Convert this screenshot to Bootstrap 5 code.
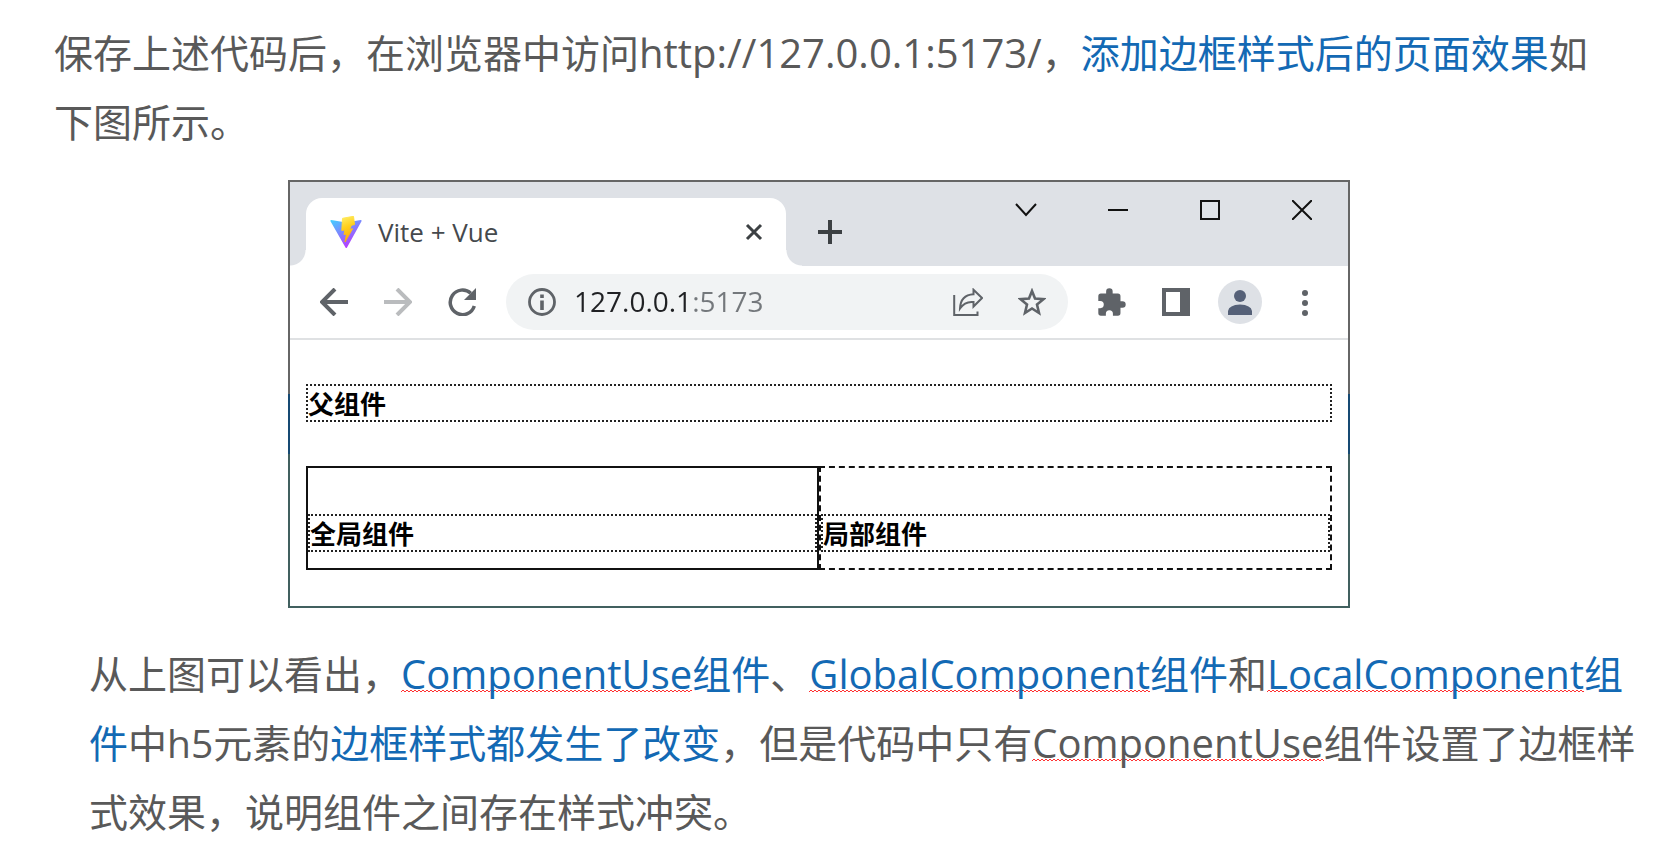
<!DOCTYPE html>
<html lang="zh-CN">
<head>
<meta charset="utf-8">
<meta name="viewport" content="width=device-width, initial-scale=1">
<title>添加边框样式后的页面效果</title>
<link href="https://cdn.jsdelivr.net/npm/bootstrap@5.3.0/dist/css/bootstrap.min.css" rel="stylesheet">
<style>
  body { font-family: "Open Sans", "Noto Sans CJK SC", sans-serif; color: #595959; background: #fff; }
  .lesson { padding: 18px 54px 0; }
  .prose { font-size: 39px; line-height: 69px; margin: 0; }
  .prose-intro { padding-right: 16px; }
  .prose-note { margin-left: 35px; margin-right: -28px; }
  .key { color: #1369b4; }
  .latin, .spell { font-size: 40px; line-height: 1; }
  .spell {
    background: url("data:image/svg+xml,%3Csvg xmlns='http://www.w3.org/2000/svg' width='4' height='4'%3E%3Cpath d='M0 3L2 1L4 3' fill='none' stroke='%23f33' stroke-width='1'/%3E%3C/svg%3E") repeat-x left bottom 8px;
  }
  .shot { padding-right: 34px; margin: 24px 0 31px; }
  .browser {
    width: 100%; max-width: 1062px; border: 2px solid;
    border-image: linear-gradient(#666 50%, #164a73 50%, #164a73 64%, #41605f 64%) 2;
  }
  .strip { background: #dee1e6; height: 84px; padding-left: 16px; }
  .tab { position: relative; width: 480px; height: 68px; background: #fff; border-radius: 16px 16px 0 0; padding: 0 8px 0 24px; color: #45494d; font-size: 26px; }
  .tab::before, .tab::after { content: ""; position: absolute; bottom: 0; width: 16px; height: 16px; }
  .tab::before { right: 100%; background: radial-gradient(circle at 0 0, transparent 15px, #fff 16px); }
  .tab::after { left: 100%; background: radial-gradient(circle at 100% 0, transparent 15px, #fff 16px); }
  .tool { width: 64px; height: 56px; padding: 0; border: 0; background: none; color: #5f6368; display: flex; align-items: center; justify-content: center; flex: none; }
  .tool-off { color: #babcbe; }
  .tool-tab { width: 48px; color: #3c4043; }
  .tool-new { margin: 22px auto 0 20px; }
  .tool-win { width: 92px; color: #111; }
  .bar { height: 74px; padding: 0 12px; border-bottom: 2px solid #dfe1e3; }
  .omni { background: #f1f3f4; border-radius: 28px; height: 56px; margin: 0 12px; padding: 0 4px; }
  .address {
    min-width: 0; border: 0; outline: 0; padding: 0 0 2px; font-size: 28px; height: 56px; color: transparent;
    background: linear-gradient(90deg, #202124 118px, #74787c 118px); -webkit-background-clip: text; background-clip: text;
  }
  .avatar { width: 44px; height: 44px; border-radius: 50%; background: #dee1e6; overflow: hidden; }
  .page { padding: 44px 16px 36px; color: #000; }
  .page h5 { border: 2px dotted #222; padding-top: 2px; font-size: 26px; line-height: 32px; font-weight: 700; margin: 0; color: #000; }
  .pair { margin-top: 44px; }
  .pair > div { flex: 1 1 0; padding: 46px 0 16px; }
  .box-global { border: 2px solid #111; }
  .box-local { border: 2px dashed #111; }
</style>
</head>
<body>
<main class="lesson">
  <p class="prose prose-intro">保存上述代码后，在浏览器中访问<span class="latin">http://127.0.0.1:5173/</span>，<span class="key">添加边框样式后的页面效果</span>如下图所示。</p>

  <div class="shot d-flex justify-content-center">
    <section class="browser" aria-label="浏览器窗口">
      <div class="strip d-flex">
        <div class="tab d-flex align-items-center align-self-end">
          <svg class="me-3" width="32" height="32" viewBox="0 0 32 32" aria-hidden="true">
            <defs>
              <linearGradient id="vg" x1="0" y1="0" x2="0.6" y2="1"><stop offset="0" stop-color="#41d1ff"/><stop offset="1" stop-color="#bd34fe"/></linearGradient>
              <linearGradient id="vy" x1="0.4" y1="0" x2="0.6" y2="1"><stop offset="0" stop-color="#ffea5c"/><stop offset="0.4" stop-color="#ffcf1a"/><stop offset="1" stop-color="#f9a30c"/></linearGradient>
            </defs>
            <path d="M31.500 5.200L17 31.400Q16.300 32.600 15.500 31.400L.5 5.200Q0 4 1.300 4L16 6.500L30.700 4Q32 4 31.500 5.200z" fill="url(#vg)"/>
            <path d="M23.500.3L12.500 2.300L11.800 14.500L15 13.800L14 18.500L16.500 18L15 26L22.500 12.800L19.500 13.400L21.500 9.200L24.500 8.600Z" fill="url(#vy)" stroke="url(#vy)" stroke-linejoin="round"/>
          </svg>
          <span class="flex-grow-1">Vite + Vue</span>
          <button class="tool tool-tab" type="button" aria-label="关闭标签页"><svg width="18" height="18" viewBox="0 0 18 18"><path d="M2 2L16 16M16 2L2 16" stroke="currentColor" stroke-width="3"/></svg></button>
        </div>
        <button class="tool tool-tab tool-new" type="button" aria-label="新标签页"><svg width="24" height="24" viewBox="0 0 24 24"><path d="M12 0V24M0 12H24" stroke="currentColor" stroke-width="4"/></svg></button>
        <button class="tool tool-win" type="button" aria-label="搜索标签页"><svg width="22" height="14" viewBox="0 0 22 14"><path d="M1 1L11 12L21 1" fill="none" stroke="currentColor" stroke-width="2"/></svg></button>
        <button class="tool tool-win" type="button" aria-label="最小化"><svg width="20" height="2" viewBox="0 0 20 2"><path d="M0 0H20V2H0z" fill="currentColor"/></svg></button>
        <button class="tool tool-win" type="button" aria-label="最大化"><svg width="20" height="20" viewBox="0 0 20 20"><path d="M1 1H19V19H1z" fill="none" stroke="currentColor" stroke-width="2"/></svg></button>
        <button class="tool tool-win" type="button" aria-label="关闭"><svg width="20" height="20" viewBox="0 0 20 20"><path d="M0 0L20 20M20 0L0 20" stroke="currentColor" stroke-width="2"/></svg></button>
      </div>

      <div class="bar d-flex align-items-center">
        <button class="tool" type="button" aria-label="后退"><svg width="28" height="28" viewBox="0 0 28 28"><path d="M28 14H3M15 1L2 14L15 27" fill="none" stroke="currentColor" stroke-width="4"/></svg></button>
        <button class="tool tool-off" type="button" aria-label="前进"><svg width="28" height="28" viewBox="0 0 28 28"><path d="M0 14H25M13 1L26 14L13 27" fill="none" stroke="currentColor" stroke-width="4"/></svg></button>
        <button class="tool" type="button" aria-label="重新加载"><svg width="28" height="28" viewBox="0 0 28 28"><path d="M26.300 18A12.300 12.300 0 1 1 22.800 5.200" fill="none" stroke="currentColor" stroke-width="3.500"/><path d="M28 0V12H16z" fill="currentColor"/></svg></button>
        <div class="omni d-flex align-items-center flex-grow-1">
          <button class="tool" type="button" aria-label="网站信息"><svg width="28" height="28" viewBox="0 0 28 28"><circle cx="14" cy="14" r="12.500" fill="none" stroke="currentColor" stroke-width="2.800"/><path d="M12.200 12.500h3.600V22h-3.600zM12.200 6.500h3.600V10h-3.600z" fill="currentColor"/></svg></button>
          <input class="address flex-grow-1" type="text" aria-label="地址" value="127.0.0.1:5173">
          <button class="tool" type="button" aria-label="分享"><svg width="30" height="28" viewBox="0 0 30 28" fill="none" stroke="currentColor" stroke-width="2"><path d="M1.200 7V27H24.500V23.500"/><path d="M20.500 1.800L29 10L20.500 18.500V14Q12 13 7 20.500Q7.500 7 20.500 6.200z"/></svg></button>
          <button class="tool" type="button" aria-label="收藏"><svg width="28" height="28" viewBox="0 0 28 28"><path d="M14 3L17 10.500L25.500 11.200L19 16.500L21 25L14 20.500L7 25L9 16.500L2.500 11.200L11 10.500z" fill="none" stroke="currentColor" stroke-width="2.600"/></svg></button>
        </div>
        <button class="tool" type="button" aria-label="扩展程序"><svg width="30" height="30" viewBox="1 0 23 23"><path d="M20.500 11H19V7a2 2 0 0 0-2-2h-4V3.500a2.500 2.500 0 0 0-5 0V5H4a2 2 0 0 0-2 2v3.800h1.500a2.700 2.700 0 0 1 0 5.400H2V20a2 2 0 0 0 2 2h3.800v-1.500a2.700 2.700 0 0 1 5.400 0V22H17a2 2 0 0 0 2-2v-4h1.500a2.500 2.500 0 0 0 0-5z" fill="currentColor"/></svg></button>
        <button class="tool" type="button" aria-label="侧边栏"><svg width="28" height="28" viewBox="0 0 28 28"><path d="M0 0H28V28H0zM4 4V24H18V4z" fill="currentColor" fill-rule="evenodd"/></svg></button>
        <button class="tool" type="button" aria-label="个人资料"><span class="avatar"><svg class="d-block" width="44" height="44" viewBox="0 0 44 44" fill="#566178"><circle cx="22" cy="16" r="6"/><path d="M10 35V31Q11 25 22 24.500Q33 25 34 31V35z"/></svg></span></button>
        <button class="tool" type="button" aria-label="菜单"><svg width="8" height="28" viewBox="0 0 8 28" fill="currentColor"><circle cx="5" cy="5" r="3"/><circle cx="5" cy="15" r="3"/><circle cx="5" cy="25" r="3"/></svg></button>
      </div>

      <div class="page">
        <h5>父组件</h5>
        <div class="pair d-flex">
          <div class="box-global"><h5>全局组件</h5></div>
          <div class="box-local"><h5>局部组件</h5></div>
        </div>
      </div>
    </section>
  </div>

  <p class="prose prose-note">从上图可以看出，<span class="key"><span class="spell">ComponentUse</span>组件</span>、<span class="key"><span class="spell">GlobalComponent</span>组件</span>和<span class="key"><span class="spell">LocalComponent</span>组件</span>中h5元素的<span class="key">边框样式都发生了改变</span>，但是代码中只有<span class="spell">ComponentUse</span>组件设置了边框样式效果，说明组件之间存在样式冲突。</p>
</main>
<script src="https://cdn.jsdelivr.net/npm/bootstrap@5.3.0/dist/js/bootstrap.bundle.min.js"></script>
</body>
</html>
